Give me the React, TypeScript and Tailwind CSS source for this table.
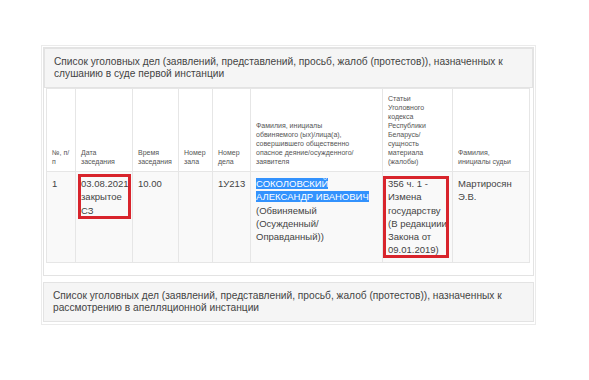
const headers: string[][] = [
  ["№, п/", "п"],
  ["Дата", "заседания"],
  ["Время", "заседания"],
  ["Номер", "зала"],
  ["Номер", "дела"],
  [
    "Фамилия, инициалы",
    "обвиняемого (ых)/лица(а),",
    "совершившего общественно",
    "опасное деяние/осужденного/",
    "заявителя",
  ],
  [
    "Статьи",
    "Уголовного",
    "кодекса",
    "Республики",
    "Беларусь/",
    "сущность",
    "материала",
    "(жалобы)",
  ],
  ["Фамилия,", "инициалы судьи"],
];

const widths = [29, 57, 46, 34, 38, 132, 70, 77];

const Lines = ({ lines }: { lines: string[] }) => (
  <>
    {lines.map((l, i) => (
      <span key={i} className="block whitespace-nowrap">
        {l}
      </span>
    ))}
  </>
);

const PanelTitle = ({ children }: { children: React.ReactNode }) => (
  <div className="border border-[#e3e3e3] bg-[#f5f5f5] px-[9px] py-[7px] text-[10.2px] leading-[12px] text-[#444]">
    {children}
  </div>
);

const cell = "border border-[#e6e6e6] px-[5px] pt-[5px] pb-[5px]";

const App = () => {
  return (
    <div
      className="min-h-[380px] w-[589px] bg-white pt-[45px]"
      style={{ fontFamily: '"Liberation Sans", Arial, sans-serif' }}
    >
      <div className="ml-[41px] w-[495px] border border-[#ebebeb] p-[1px] pb-[2px]">
        {/* first panel */}
        <div className="border border-[#e3e3e3]">
          <PanelTitle>
            Список уголовных дел (заявлений, представлений, просьб, жалоб (протестов)), назначенных к
            <br />
            слушанию в суде первой инстанции
          </PanelTitle>
          <div className="px-[2px] pt-0 pb-[12px]">
            <table className="table-fixed border-collapse" style={{ width: 483 }}>
              <colgroup>
                {widths.map((w, i) => (
                  <col key={i} style={{ width: w }} />
                ))}
              </colgroup>
              <thead>
                <tr>
                  {headers.map((h, i) => (
                    <th
                      key={i}
                      className="border border-[#e6e6e6] px-[5px] pt-[5px] pb-[5px] text-left align-bottom text-[7px] font-normal leading-[9px] text-[#555]"
                    >
                      <Lines lines={h} />
                    </th>
                  ))}
                </tr>
              </thead>
              <tbody>
                <tr className="bg-[#f9f9f9] align-top text-[9.5px] leading-[13.3px] text-[#444]">
                  <td className={cell}>1</td>
                  <td className={`relative ${cell}`}>
                    <Lines lines={["03.08.2021", "закрытое", "СЗ"]} />
                    <div className="absolute left-[2px] top-[2px] h-[45px] w-[53px] border-[3px] border-[#d8242c]" />
                  </td>
                  <td className={cell}>10.00</td>
                  <td className={cell}></td>
                  <td className={cell}>1У213</td>
                  <td className={cell}>
                    <span className="bg-[#3392fd] text-white">СОКОЛОВСКИЙ</span>
                    <br />
                    <span className="bg-[#3392fd] text-white">АЛЕКСАНДР ИВАНОВИЧ</span>
                    <br />
                    (Обвиняемый
                    <br />
                    (Осужденный/
                    <br />
                    Оправданный))
                  </td>
                  <td className={`relative ${cell}`}>
                    <Lines
                      lines={[
                        "356 ч. 1 -",
                        "Измена",
                        "государству",
                        "(В редакциии",
                        "Закона от",
                        "09.01.2019)",
                      ]}
                    />
                    <div className="absolute left-[0px] right-[3px] top-[4px] bottom-[4px] border-[3px] border-[#d8242c]" />
                  </td>
                  <td className={cell}>
                    <Lines lines={["Мартиросян", "Э.В."]} />
                  </td>
                </tr>
              </tbody>
            </table>
          </div>
        </div>

        {/* second panel */}
        <div className="mt-[6px]">
          <PanelTitle>
            Список уголовных дел (заявлений, представлений, просьб, жалоб (протестов)), назначенных к
            <br />
            рассмотрению в апелляционной инстанции
          </PanelTitle>
        </div>
      </div>
    </div>
  );
};

export default App;
